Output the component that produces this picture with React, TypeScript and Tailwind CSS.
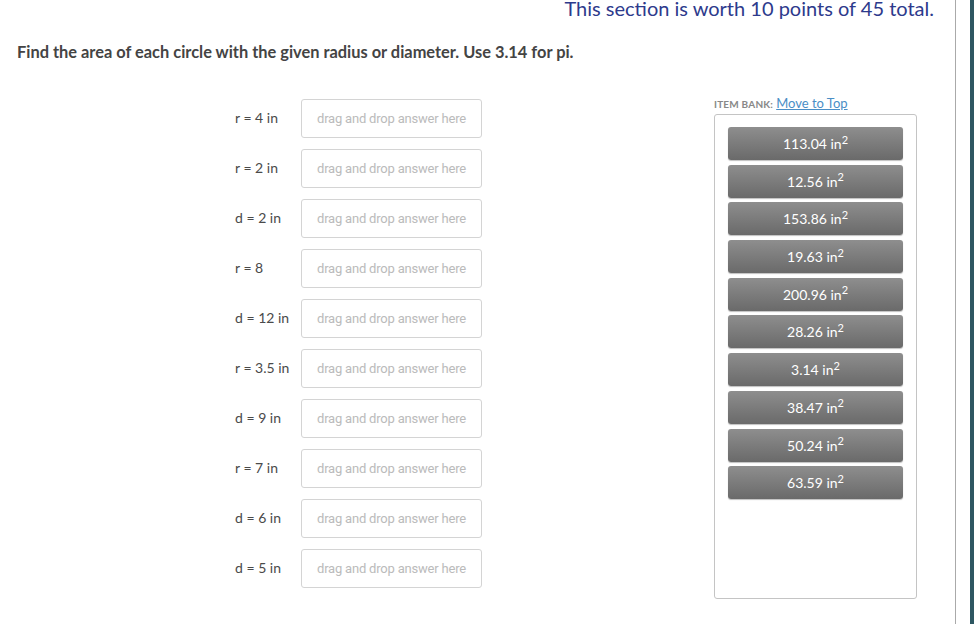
import React from "react";

const rows = [
  "r = 4 in",
  "r = 2 in",
  "d = 2 in",
  "r = 8",
  "d = 12 in",
  "r = 3.5 in",
  "d = 9 in",
  "r = 7 in",
  "d = 6 in",
  "d = 5 in",
];

const bank = [
  "113.04",
  "12.56",
  "153.86",
  "19.63",
  "200.96",
  "28.26",
  "3.14",
  "38.47",
  "50.24",
  "63.59",
];

export default function App() {
  return (
    <div className="relative flex h-[624px] w-[974px] overflow-hidden bg-white font-['Lato','Open_Sans',sans-serif]">
      <div className="flex w-[955px] flex-col">
        {/* Header */}
        <div className="flex h-[20px] items-start justify-end pr-[21px]">
          <p className="-mt-[4px] text-[20px] leading-[24px] text-[#2d3a8c]">
            This section is worth 10 points of 45 total.
          </p>
        </div>

        <h1 className="mt-[21px] pl-[17px] text-[16.4px] font-bold leading-[22px] text-[#444]">
          Find the area of each circle with the given radius or diameter. Use 3.14 for pi.
        </h1>

        <div className="mt-[32px] flex">
          {/* Questions */}
          <div className="ml-[235px] flex flex-col gap-[11px] pt-[4px]">
            {rows.map((r) => (
              <div key={r} className="flex items-center">
                <span className="-mt-[3px] w-[66px] text-[14px] text-[#4a4a4a]">{r}</span>
                <div className="flex h-[39px] w-[181px] items-center rounded-[3px] border border-[#d4d4d4] pl-[15px] font-['Roboto',Arial,sans-serif] text-[13px] tracking-[-0.2px] text-[#bbb]">
                  drag and drop answer here
                </div>
              </div>
            ))}
          </div>

          {/* Item bank */}
          <div className="ml-[232px] flex flex-col">
            <div className="flex items-baseline gap-[3px] leading-[16px]">
              <span className="text-[10px] font-bold tracking-[0.2px] text-[#888]">ITEM BANK:</span>
              <span className="text-[13px] text-[#4a8ec6] underline">Move to Top</span>
            </div>
            <div className="mt-[2px] flex h-[485px] w-[203px] flex-col gap-[4.7px] rounded-[3px] border border-[#c4c4c4] px-[13px] pt-[12px]">
              {bank.map((b) => (
                <div
                  key={b}
                  className="flex h-[33px] w-[175px] items-center justify-center rounded-[3px] bg-gradient-to-b from-[#8e8e8e] to-[#6a6a6a] text-[14px] text-white shadow-[0_1px_1px_rgba(0,0,0,0.25)]"
                >
                  <span>
                    {b} in<sup className="text-[11px]">2</sup>
                  </span>
                </div>
              ))}
            </div>
          </div>
        </div>
      </div>

      {/* Right edge */}
      <div className="h-full w-px bg-[#aaa]" />
      <div className="h-full w-[14px] bg-white" />
      <div className="h-full flex-1 bg-[#2e5762]" />
    </div>
  );
}
